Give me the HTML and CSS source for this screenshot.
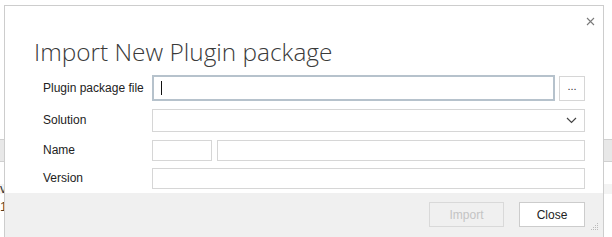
FILE: index.html
```html
<!doctype html>
<html lang="en">
  <head>
    <meta charset="UTF-8" />
    <meta name="viewport" content="width=device-width, initial-scale=1.0" />
    <title>Import New Plugin package</title>
    <link rel="stylesheet" href="styles.css">
  </head>
  <body>
    <div class="page">
      <div class="page-top"></div>
      <div class="grid-head"></div>
      <div class="grid-row first">v</div>
      <div class="grid-row second">1</div>
    </div>

    <div class="dialog">
      <button class="dialog-close" aria-label="Close">
        <svg width="9" height="9" viewBox="0 0 9 9">
          <path d="M1 1 L8 8 M8 1 L1 8" stroke="#7a7a7a" stroke-width="1.1" fill="none" />
        </svg>
      </button>
      <h1 class="dialog-title">Import New Plugin package</h1>

      <div class="form">
        <label class="field-label">Plugin package file</label>
        <div class="field">
          <input class="input focused" type="text" />
          <button class="browse">...</button>
        </div>

        <label class="field-label">Solution</label>
        <div class="field">
          <div class="select">
            <svg width="11" height="7" viewBox="0 0 11 7">
              <path d="M1 1 L5.5 5.5 L10 1" stroke="#444" stroke-width="1.2" fill="none" />
            </svg>
          </div>
        </div>

        <label class="field-label">Name</label>
        <div class="field">
          <input class="input prefix" type="text" />
          <input class="input" type="text" />
        </div>

        <label class="field-label">Version</label>
        <div class="field">
          <input class="input" type="text" />
        </div>
      </div>

      <div class="dialog-footer">
        <button class="btn" disabled>Import</button>
        <button class="btn">Close</button>
        <div class="grip">
          <svg width="8" height="8" viewBox="0 0 8 8">
            <rect x="7" y="0" width="1" height="1" fill="#bbb" />
            <rect x="7" y="2" width="1" height="1" fill="#bbb" />
            <rect x="7" y="4" width="1" height="1" fill="#bbb" />
            <rect x="7" y="6" width="1" height="1" fill="#bbb" />
            <rect x="5" y="2" width="1" height="1" fill="#bbb" />
            <rect x="5" y="4" width="1" height="1" fill="#bbb" />
            <rect x="5" y="6" width="1" height="1" fill="#bbb" />
            <rect x="3" y="4" width="1" height="1" fill="#bbb" />
            <rect x="3" y="6" width="1" height="1" fill="#bbb" />
            <rect x="1" y="6" width="1" height="1" fill="#bbb" />
          </svg>
        </div>
      </div>
    </div>
  </body>
</html>
```

FILE: styles.css
```css
html,
body {
  margin: 0;
  background: #fff;
  font-family: "Segoe UI", "Liberation Sans", sans-serif;
  font-size: 12px;
  color: #222;
  overflow: hidden;
}

/* page behind the dialog */
.page {
  width: 612px;
  height: 237px;
}
.page-top {
  height: 139px;
}
.grid-head {
  height: 21px;
  background: #e8e8e8;
  border-top: 1px solid #d0d0d0;
  border-bottom: 1px solid #d0d0d0;
}
.grid-row {
  font-size: 13px;
  color: #333;
}
.grid-row.first {
  margin-top: 22px;
  height: 10px;
  line-height: 10px;
  background: #f3f3f3;
}
.grid-row.second {
  margin-top: 5px;
  color: #5a3a1a;
}

/* dialog */
.dialog {
  position: absolute;
  left: 4px;
  top: 5px;
  width: 598px;
  height: 240px;
  background: #fff;
  border: 1px solid #cdcdcd;
  display: flex;
  flex-direction: column;
}
.dialog-close {
  position: absolute;
  top: 9px;
  right: 6px;
  width: 13px;
  height: 13px;
  padding: 0;
  border: 0;
  background: none;
  display: flex;
  align-items: center;
  justify-content: center;
}
.dialog-title {
  margin: 29px 0 2px 29px;
  font-family: "Segoe UI Light", "Open Sans", sans-serif;
  font-weight: 300;
  font-size: 24.4px;
  line-height: 34px;
  color: #3a3a3a;
}

.form {
  display: grid;
  grid-template-columns: 109px 1fr;
  grid-template-rows: 34px 30px 30px 26px;
  margin: 0 18px 0 38px;
  align-items: center;
}
.field-label {
  color: #222;
}
.field {
  display: flex;
  align-items: center;
  gap: 5px;
}
.input {
  box-sizing: border-box;
  flex: 1;
  height: 21px;
  margin: 0;
  border: 1px solid #d6d6d6;
  background: #fff;
  font: inherit;
  padding: 0 4px;
}
.input.focused {
  flex: none;
  width: 403px;
  height: 26px;
  border: 2px solid #b6c2cc;
  background:
    linear-gradient(#111, #111) 7px 4px / 1px 14px no-repeat,
    #fff;
}
.input.prefix {
  flex: none;
  width: 60px;
}
.browse {
  box-sizing: border-box;
  width: 26px;
  height: 25px;
  margin-left: -1px;
  padding: 0 0 4px;
  border: 1px solid #d6d6d6;
  background: #fff;
  font: inherit;
  font-size: 11px;
  color: #333;
}
.select {
  box-sizing: border-box;
  flex: 1;
  height: 23px;
  border: 1px solid #d6d6d6;
  display: flex;
  align-items: center;
  justify-content: flex-end;
  padding-right: 7px;
}

.dialog-footer {
  margin-top: 2px;
  flex: 1;
  background: #f0f0f0;
  display: flex;
  justify-content: flex-end;
  align-items: flex-start;
  padding: 9px 18px 0 0;
  gap: 15px;
  position: relative;
}
.btn {
  box-sizing: border-box;
  height: 25px;
  min-width: 66px;
  padding: 0 12px;
  border: 1px solid #ccc;
  background: #fff;
  font: inherit;
  font-size: 12px;
  color: #222;
}
.btn:disabled {
  width: 75px;
  background: #f0f0f0;
  border-color: #d9d9d9;
  color: #c4c4c4;
}
.grip {
  position: absolute;
  right: 5px;
  top: 30px;
  line-height: 0;
}
```
